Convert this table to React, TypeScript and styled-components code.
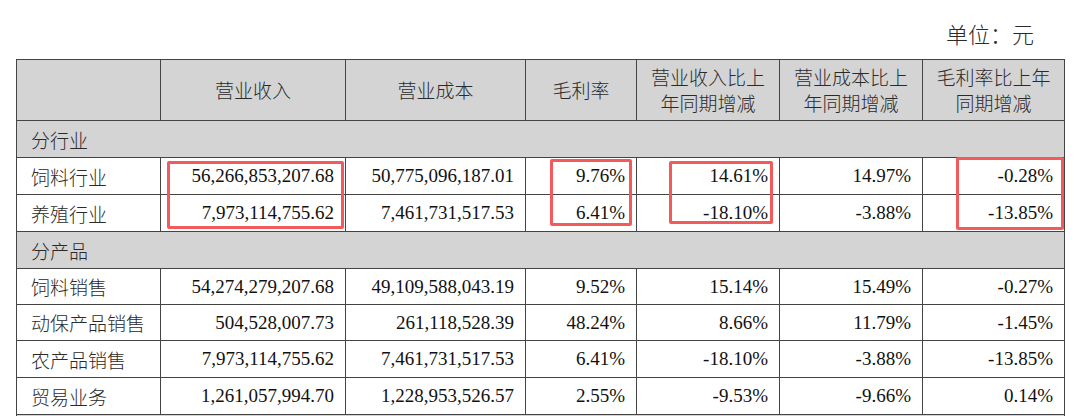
import React from "react";
import styled, { createGlobalStyle } from "styled-components";

const Global = createGlobalStyle`
  html, body { margin: 0; padding: 0; background: #ffffff; }
  body { font-family: "Liberation Serif", "Noto Sans CJK SC", serif; color: #1c1c1c; }
`;

const Page = styled.div`
  position: relative;
  width: 1080px;
  height: 416px;
  overflow: hidden;
  background: #ffffff;
`;

const UnitLine = styled.div`
  height: 59px;
  box-sizing: border-box;
  padding: 22px 46px 0 0;
  display: flex;
  justify-content: flex-end;
  font-family: "Noto Sans CJK SC", sans-serif;
  font-weight: 300;
  font-size: 22px;
  line-height: 22px;
  color: #2a2a2a;
`;

const Table = styled.table`
  margin-left: 16px;
  width: 1048px;
  border-collapse: collapse;
  table-layout: fixed;
  font-size: 19px;
  border: 1px solid #444;
`;

const HeadCell = styled.th`
  background: #d4d4d4;
  border: 1px solid #444;
  height: 60px;
  padding: 0;
  font-weight: 300;
  text-align: center;
  font-family: "Noto Sans CJK SC", sans-serif;
  line-height: 26px;
  color: #2a2a2a;
`;

const SectionCell = styled.td`
  background: #d4d4d4;
  border: 1px solid #444;
  padding: 0 0 0 14px;
  text-align: left;
  font-family: "Noto Sans CJK SC", sans-serif;
  font-weight: 300;
  color: #2a2a2a;
`;

const Row = styled.tr<{ $h: number }>`
  height: ${(p) => p.$h}px;
`;

const LabelCell = styled.td`
  border: 1px solid #444;
  padding: 0 0 0 14px;
  text-align: left;
  white-space: nowrap;
  font-family: "Noto Sans CJK SC", sans-serif;
  font-weight: 300;
  color: #2a2a2a;
`;

const NumCell = styled.td`
  border: 1px solid #444;
  padding: 0 11px 0 0;
  text-align: right;
  white-space: nowrap;
  font-family: "Liberation Serif", serif;
  color: #111;
`;

const Mark = styled.div`
  position: absolute;
  box-sizing: border-box;
  border: 3px solid #f25a5c;
  border-radius: 2px;
  pointer-events: none;
`;

const widths = [144, 185, 180, 111, 143, 143, 142];

type DataRow = { label: string; values: string[] };
type Section = { title: string; rows: DataRow[] };

const sections: Section[] = [
  {
    title: "分行业",
    rows: [
      { label: "饲料行业", values: ["56,266,853,207.68", "50,775,096,187.01", "9.76%", "14.61%", "14.97%", "-0.28%"] },
      { label: "养殖行业", values: ["7,973,114,755.62", "7,461,731,517.53", "6.41%", "-18.10%", "-3.88%", "-13.85%"] },
    ],
  },
  {
    title: "分产品",
    rows: [
      { label: "饲料销售", values: ["54,274,279,207.68", "49,109,588,043.19", "9.52%", "15.14%", "15.49%", "-0.27%"] },
      { label: "动保产品销售", values: ["504,528,007.73", "261,118,528.39", "48.24%", "8.66%", "11.79%", "-1.45%"] },
      { label: "农产品销售", values: ["7,973,114,755.62", "7,461,731,517.53", "6.41%", "-18.10%", "-3.88%", "-13.85%"] },
      { label: "贸易业务", values: ["1,261,057,994.70", "1,228,953,526.57", "2.55%", "-9.53%", "-9.66%", "0.14%"] },
    ],
  },
  { title: "", rows: [] },
];

const heights = [37, 37, 37, 37, 36, 36, 37, 37, 37];

const headers: string[][] = [
  [""],
  ["营业收入"],
  ["营业成本"],
  ["毛利率"],
  ["营业收入比上", "年同期增减"],
  ["营业成本比上", "年同期增减"],
  ["毛利率比上年", "同期增减"],
];

const marks = [
  { left: 167, top: 161, width: 177, height: 68 },
  { left: 550, top: 159, width: 82, height: 67 },
  { left: 669, top: 161, width: 104, height: 63 },
  { left: 956, top: 157, width: 108, height: 73 },
];

export default function App() {
  let idx = 0;
  return (
    <Page>
      <Global />
      <UnitLine>单位：元</UnitLine>
      <Table>
        <colgroup>
          {widths.map((w, i) => (
            <col key={i} style={{ width: w }} />
          ))}
        </colgroup>
        <thead>
          <tr>
            {headers.map((lines, i) => (
              <HeadCell key={i}>
                {lines.map((l, j) => (
                  <React.Fragment key={j}>
                    {j > 0 && <br />}
                    {l}
                  </React.Fragment>
                ))}
              </HeadCell>
            ))}
          </tr>
        </thead>
        <tbody>
          {sections.map((s, si) => (
            <React.Fragment key={si}>
              <Row $h={heights[idx++] ?? 37}>
                <SectionCell colSpan={7}>{s.title}</SectionCell>
              </Row>
              {s.rows.map((r) => (
                <Row key={r.label} $h={heights[idx++] ?? 37}>
                  <LabelCell>{r.label}</LabelCell>
                  {r.values.map((v, k) => (
                    <NumCell key={k}>{v}</NumCell>
                  ))}
                </Row>
              ))}
            </React.Fragment>
          ))}
        </tbody>
      </Table>
      {marks.map((m, i) => (
        <Mark key={i} style={{ left: m.left, top: m.top, width: m.width, height: m.height }} />
      ))}
    </Page>
  );
}
